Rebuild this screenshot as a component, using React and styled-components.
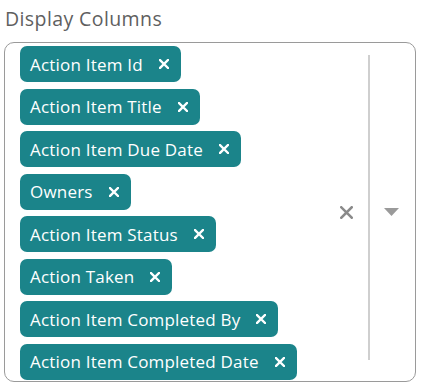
import styled, { createGlobalStyle } from "styled-components";

const Global = createGlobalStyle`
  body {
    margin: 0;
    background: #fff;
    font-family: "Open Sans", "Noto Sans", sans-serif;
  }
`;

const Page = styled.div`
  width: 423px;
  height: 386px;
  padding: 6px 0 0 4px;
  box-sizing: border-box;
`;

const Label = styled.div`
  font-size: 19.5px;
  letter-spacing: 0.4px;
  color: #5f5f5f;
  line-height: 25px;
  margin: 0 0 11px 1px;
`;

const Box = styled.div`
  width: 412px;
  height: 340px;
  box-sizing: border-box;
  border: 1px solid #9a9a9a;
  border-radius: 10px;
  display: flex;
  align-items: stretch;
`;

const ChipList = styled.div`
  flex: 1;
  display: flex;
  flex-direction: column;
  align-items: flex-start;
  gap: 6.5px;
  padding: 3px 0 0 15px;
`;

const Chip = styled.div`
  height: 36px;
  box-sizing: border-box;
  display: flex;
  align-items: center;
  background: #1b848a;
  color: #fff;
  border-radius: 7px;
  padding: 0 12px 0 10px;
  font-size: 17px;
  letter-spacing: 0.2px;
`;

const ChipX = styled.svg`
  width: 10px;
  height: 10px;
  margin-left: 16px;
`;

const Indicators = styled.div`
  display: flex;
  align-items: center;
`;

const ClearIcon = styled.svg`
  width: 13px;
  height: 13px;
  margin-right: 15px;
`;

const Separator = styled.div`
  width: 2px;
  align-self: stretch;
  background: #cfcfcf;
  margin: 12px 0 21px;
`;

const Caret = styled.svg`
  width: 15px;
  height: 8px;
  margin: 0 16px 0 14px;
`;

const columns = [
  "Action Item Id",
  "Action Item Title",
  "Action Item Due Date",
  "Owners",
  "Action Item Status",
  "Action Taken",
  "Action Item Completed By",
  "Action Item Completed Date",
];

function Cross({ as: Comp, color, width }) {
  return (
    <Comp viewBox="0 0 10 10">
      <path
        d="M1 1 L9 9 M9 1 L1 9"
        stroke={color}
        strokeWidth={width}
        strokeLinecap="square"
      />
    </Comp>
  );
}

export default function App() {
  return (
    <Page>
      <Global />
      <Label>Display Columns</Label>
      <Box>
        <ChipList>
          {columns.map((c) => (
            <Chip key={c}>
              {c}
              <Cross as={ChipX} color="#fff" width={2.4} />
            </Chip>
          ))}
        </ChipList>
        <Indicators>
          <Cross as={ClearIcon} color="#8a8a8a" width={2} />
          <Separator />
          <Caret viewBox="0 0 15 8">
            <path d="M0 0 H15 L7.5 8 Z" fill="#9a9a9a" />
          </Caret>
        </Indicators>
      </Box>
    </Page>
  );
}
